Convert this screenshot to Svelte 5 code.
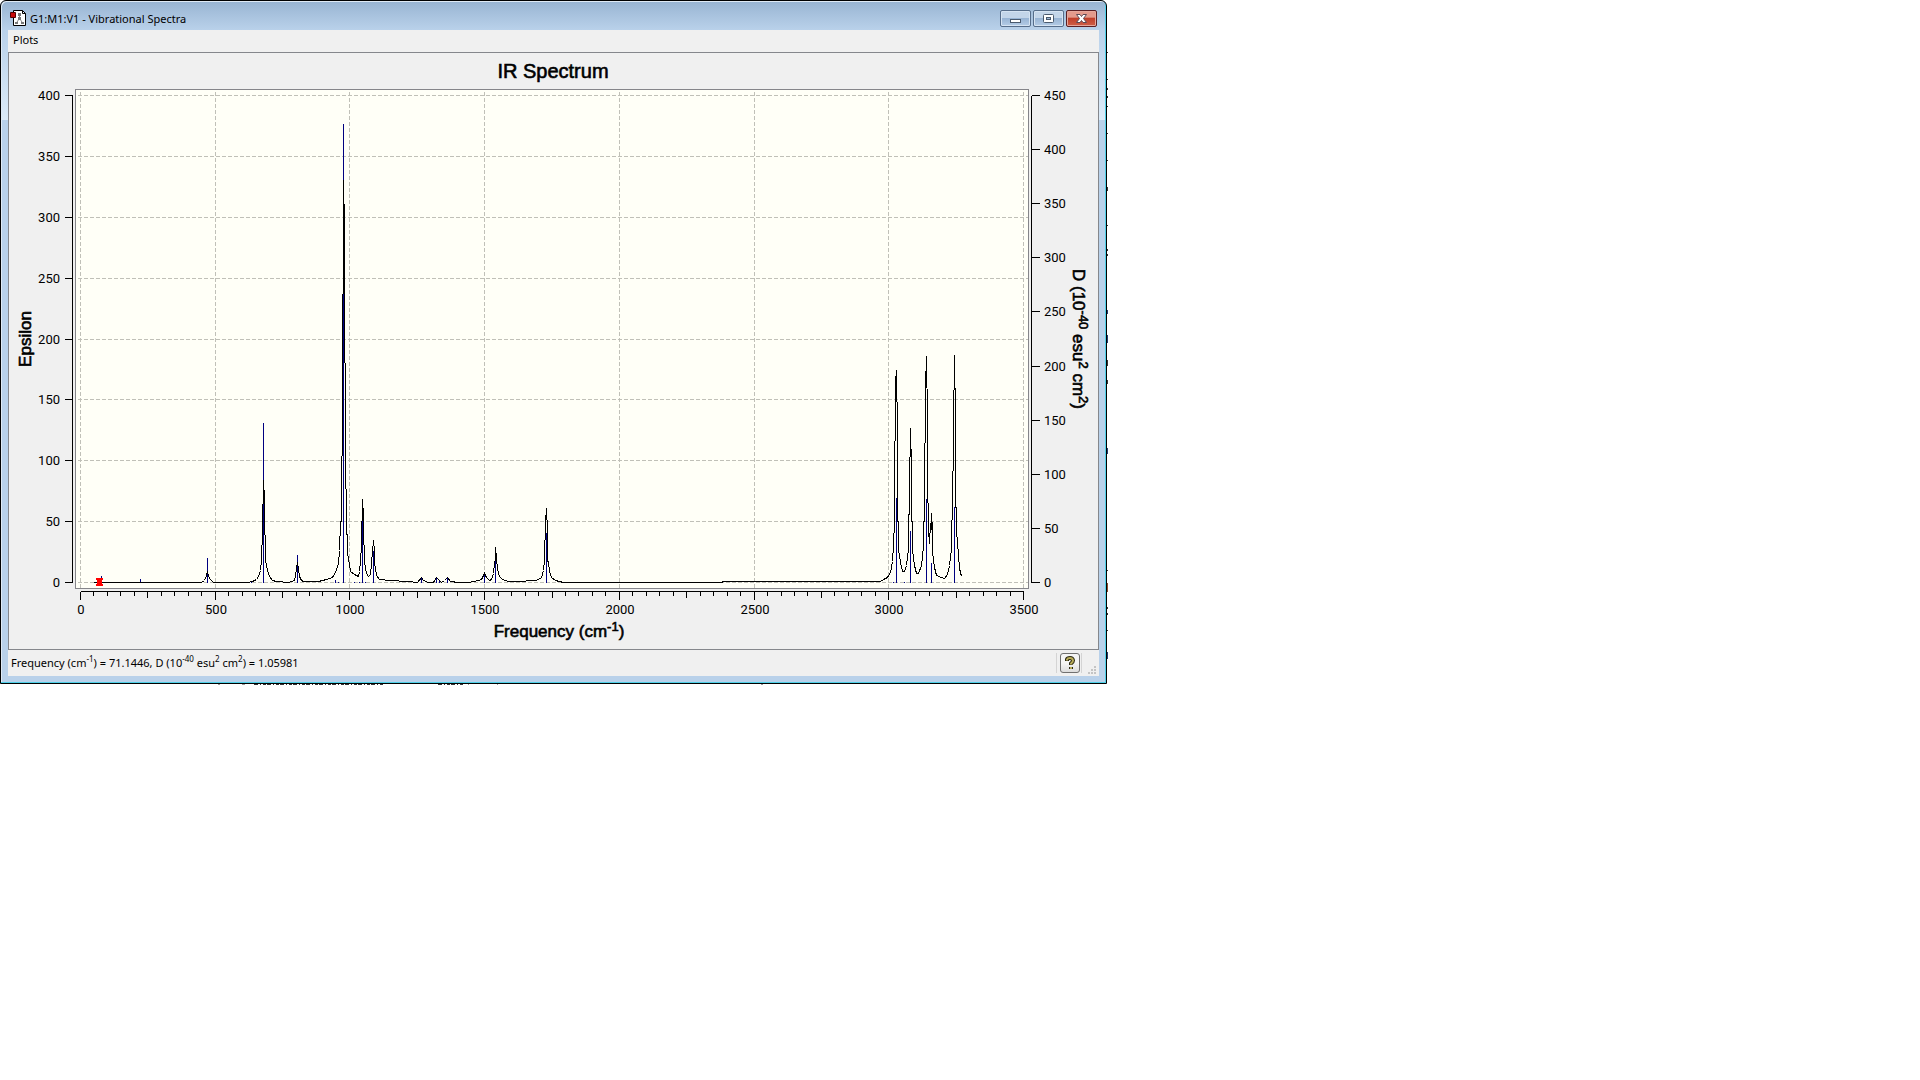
<script>
  // Chart geometry, in the units of the chart's viewBox
  const x0 = 80, xEnd = 1023, y0 = 582, yTop = 95;
  const xAt = (v) => Math.round(x0 + (v * (xEnd - x0)) / 3500);
  const yLeft = (v) => Math.round(y0 - (v * (y0 - yTop)) / 400);
  const yRight = (v) => Math.round(y0 - (v * (y0 - yTop)) / 450);
  const range = (n, step) => Array.from({ length: n }, (_, i) => i * step);

  const xMajor = range(8, 500);
  const xMinor = range(71, 50);
  const epsilon = range(9, 50);
  const dipole = range(10, 50);
  const tickEnd = (v) => (v % 500 === 0 ? 599 : v % 250 === 0 ? 597 : 595);

  // Dipole strengths: position and top of each stick
  const sticks = [
    [101, 576], [140, 579], [207, 558], [251, 582], [263, 423], [297, 555],
    [335, 580], [338, 582], [343, 124], [354, 582], [359, 582], [362, 520],
    [365, 582], [373, 551], [421, 578], [436, 577], [439, 581], [447, 577],
    [484, 575], [495, 557], [546, 533], [893, 582], [896, 498], [904, 582],
    [910, 531], [926, 499], [931, 563], [954, 507]
  ];

  const curve = [
    [93, 582], [201, 582], [204, 580], [206, 575], [207, 571], [208, 576], [210, 579], [213, 582],
    [247, 582], [252, 581], [256, 579], [258, 576], [260, 570], [261, 560], [262, 530], [262, 508],
    [263, 500], [263, 480], [264, 498], [264, 534], [265, 535], [265, 560], [267, 570], [269, 576],
    [272, 580], [276, 581], [288, 582], [291, 581], [294, 580], [295, 575], [296, 568], [297, 562],
    [298, 568], [299, 576], [301, 580], [303, 581], [318, 581], [326, 579], [332, 577], [335, 572],
    [338, 563], [339, 550], [340, 522], [341, 520], [341, 456], [342, 455], [342, 294], [343, 293],
    [343, 180], [344, 226], [344, 362], [345, 363], [345, 488], [346, 489], [346, 533], [347, 535],
    [347, 552], [349, 564], [350, 571], [354, 574], [358, 576], [359, 571], [360, 561], [361, 545],
    [361, 521], [362, 520], [362, 499], [363, 516], [363, 544], [364, 545], [364, 562], [366, 573],
    [368, 576], [370, 574], [371, 563], [372, 551], [373, 540], [374, 550], [374, 562], [376, 575],
    [379, 579], [390, 580], [407, 581], [417, 582], [421, 577], [423, 580], [428, 582], [433, 582],
    [436, 577], [439, 580], [441, 582], [444, 580], [447, 577], [450, 581], [458, 582], [468, 582],
    [478, 580], [481, 579], [484, 573], [486, 577], [489, 580], [491, 579], [493, 573], [494, 563],
    [495, 558], [495, 547], [496, 558], [497, 569], [499, 576], [502, 579], [508, 581], [515, 581],
    [536, 580], [541, 577], [543, 570], [544, 560], [544, 540], [545, 539], [545, 515], [546, 514],
    [546, 508], [547, 530], [547, 560], [548, 562], [549, 571], [551, 577], [555, 580], [563, 582],
    [720, 582], [724, 581], [880, 581], [883, 579], [887, 577], [890, 572], [892, 561], [893, 545],
    [894, 520], [894, 441], [895, 440], [895, 376], [896, 375], [896, 370], [897, 432], [897, 520],
    [898, 522], [898, 549], [900, 562], [902, 571], [904, 571], [906, 565], [908, 548], [908, 515],
    [909, 513], [909, 457], [910, 456], [910, 428], [911, 468], [911, 520], [912, 522], [912, 549],
    [914, 565], [916, 573], [918, 573], [921, 565], [923, 546], [923, 522], [924, 520], [924, 443],
    [925, 442], [925, 371], [926, 370], [926, 356], [927, 420], [927, 500], [928, 505], [928, 530],
    [929, 543], [930, 523], [931, 529], [931, 513], [932, 530], [932, 552], [934, 567], [936, 575],
    [941, 577], [944, 578], [947, 574], [949, 565], [951, 548], [951, 520], [952, 519], [952, 471],
    [953, 470], [953, 390], [954, 389], [954, 355], [955, 418], [955, 506], [956, 508], [956, 530],
    [958, 555], [959, 568], [961, 576]
  ].map((p) => p.join(',')).join(' ');
</script>

<main class="desktop">
  <section class="window" aria-label="Vibrational Spectra">
    <header class="titlebar">
      <svg class="app-icon" viewBox="0 0 16 16" aria-hidden="true">
        <path d="M3.5.5h9l3 3v12h-12z" fill="#fff" stroke="#000" />
        <path d="M12.5.5v3h3" fill="none" stroke="#000" />
        <path d="M9.5 4v4l-3 5M9.500 8l3 5" fill="none" stroke="#8a8a8a" />
        <path d="M8 3h3v3H8zM8 7h3v3H8zM5 12h3v2H5zM11 12h3v2h-3z" fill="#777" />
        <path d="M.5 2.500h5v5h-5z" fill="#c80a0a" stroke="#500" />
      </svg>
      <h1>G1:M1:V1 - Vibrational Spectra</h1>
      <div class="controls">
        <button class="control" aria-label="Minimize">
          <svg viewBox="0 0 29 15"><rect x="9.500" y="8.500" width="10" height="3" fill="#fff" stroke="#4a5a6e" /></svg>
        </button>
        <button class="control" aria-label="Maximize">
          <svg viewBox="0 0 29 15">
            <rect x="9.500" y="3.500" width="10" height="8" rx="1" fill="#fff" stroke="#4a5a6e" />
            <rect x="12.500" y="6.500" width="4" height="2" fill="#9db9d8" stroke="#4a5a6e" />
          </svg>
        </button>
        <button class="control close" aria-label="Close">
          <svg viewBox="0 0 29 15">
            <path d="M9.500 3.500h3.500l1.500 2 1.500-2h3.500l-3 4 3 4H16l-1.500-2-1.500 2H9.500l3-4z" fill="#fff" stroke="#5c4a55" />
          </svg>
        </button>
      </div>
    </header>

    <div class="body">
      <nav class="menubar"><button class="menu">Plots</button></nav>

      <figure class="chart">
        <svg viewBox="9 53 1089 596" role="img" aria-label="IR Spectrum">
          <rect class="canvas" x="75.5" y="89.5" width="953" height="499" />

          <g class="lines" transform="translate(.5 .5)">
            {#each xMajor as v}
              <line class="grid" x1={xAt(v)} x2={xAt(v)} y1="91" y2="587" />
            {/each}
            {#each epsilon as v}
              <line class="grid" x1="77" x2="1027" y1={yLeft(v)} y2={yLeft(v)} />
              <line class="axis" x1="64" x2="72" y1={yLeft(v)} y2={yLeft(v)} />
            {/each}
            {#each dipole as v}
              <line class="axis" x1="1031" x2="1039" y1={yRight(v)} y2={yRight(v)} />
            {/each}
            {#each xMinor as v}
              <line class="axis" x1={xAt(v)} x2={xAt(v)} y1="591" y2={tickEnd(v)} />
            {/each}
            <path class="axis" d="M72 95V582M1031 95V582M80 591H1023" />
          </g>
          <g class="lines" transform="translate(.5 0)">
            {#each sticks as [x, top]}
              <line class="stick" x1={x} x2={x} y1={top} y2="583" />
            {/each}
          </g>
          <g class="lines" transform="translate(.5 .5)">
            <polyline class="curve" points={curve} />
          </g>
          <path class="marker" d="M96 578h7v2h-1v4h1v2h-7v-2h1v-4h-1z" />

          <text class="title" x="553" y="78">IR Spectrum</text>
          {#each epsilon as v}
            <text class="tick end" x="60" y={yLeft(v) + 5}>{v}</text>
          {/each}
          {#each dipole as v}
            <text class="tick" x="1044" y={yRight(v) + 5}>{v}</text>
          {/each}
          {#each xMajor as v}
            <text class="tick mid" x={xAt(v) + 1} y="614">{v}</text>
          {/each}
          <text class="label" x="559" y="637">Frequency (cm<tspan class="sup" dy="-6">-1</tspan><tspan dy="6">)</tspan></text>
          <text class="label" transform="translate(31 339) rotate(-90)">Epsilon</text>
          <text class="label" transform="translate(1073 339) rotate(90)">D (10<tspan class="sup" dy="-6">-40</tspan><tspan dy="6">{' esu'}</tspan><tspan class="sup" dy="-6">2</tspan><tspan dy="6">{' cm'}</tspan><tspan class="sup" dy="-6">2</tspan><tspan dy="6">)</tspan></text>
        </svg>
      </figure>

      <footer class="status">
        <p>Frequency (cm<sup>-1</sup>) = 71.1446, D (10<sup>-40</sup> esu<sup>2</sup> cm<sup>2</sup>) = 1.05981</p>
        <div class="help-cell">
          <button class="help" aria-label="Help">
            <svg viewBox="0 0 16 16">
              <path d="M5 6V4.500Q5.500 3 8 3t3 2.500Q11 7 9 8.500V10M9 12v2" fill="none" stroke="#2c2a14" stroke-width="4" />
              <path d="M5 5.500V4.500Q5.500 3 8 3t3 2.500Q11 7 9 8.500V9.500M9 12v2" fill="none" stroke="#b8ac58" stroke-width="2" />
            </svg>
          </button>
        </div>
        <svg class="grip" viewBox="0 0 9 9" aria-hidden="true">
          <path d="M7 0h2v2H7zM4 3h2v2H4zM7 3h2v2H7zM1 6h2v2H1zM4 6h2v2H4zM7 6h2v2H7z" fill="#c4c4c4" />
        </svg>
      </footer>
    </div>
  </section>

  <!-- Slivers of the windows lying behind -->
  <svg class="behind-right" viewBox="0 0 2 684" aria-hidden="true">
    <path d="M0 52h1v1H0zM0 79h1v1H0zM0 88h1v2H0zM0 96h1v2H0zM0 106h1v1H0zM0 133h1v1H0zM0 160h1v1H0zM0 187h1v4H0zM0 225h1v1H0zM0 249h1v2H0zM0 254h1v2H0zM0 360h1v6H0zM0 380h1v4H0zM0 570h1v1H0zM0 607h1v2H0zM0 613h1v2H0zM0 630h1v1H0z" fill="#333" />
    <path d="M0 310h1v4H0zM0 335h1v8H0zM0 448h1v6H0zM0 652h1v7H0z" fill="#223a6e" />
    <path d="M0 583h1v9H0z" fill="#8a4a2a" />
  </svg>
  <svg class="behind-bottom" viewBox="0 0 800 2" aria-hidden="true">
    <path d="M218 0h2v1h-2zM242 0h3v1h-3zM468 0h1v1h-1zM497 0h1v1h-1zM761 0h2v1h-2z" fill="#999" />
    <path d="M254 .5H384M438 .5H463" stroke="#333" stroke-dasharray="4 2 1 2 3 1" />
  </svg>
</main>

<style>
  :global(body) { background: #fff; }
  .desktop {
    display: grid;
    grid-template-columns: auto 1fr;
    font-family: "Noto Sans", "Open Sans", sans-serif;
    font-size: 11px;
    color: #000;
  }
  .window {
    box-sizing: border-box;
    width: calc(57.5vw + 3px);
    border: 1px solid #000;
    border-radius: 6px 6px 0 0;
    padding: 0 7px 7px;
    background:
      linear-gradient(#b9d1ea, #dcebf8) 0 29px / 100% 90px no-repeat,
      linear-gradient(#98b4d2, #b9d1ea) 0 0 / 100% 29px no-repeat,
      #b9d1ea;
    box-shadow: inset -1px -1px #4fd0e8, inset 1px 1px #dfeaf5;
  }
  .titlebar {
    display: flex;
    align-items: center;
    height: 29px;
    padding: 0 2px;
    gap: 4px;
  }
  .app-icon { width: 16px; height: 16px; margin-top: 4px; }
  h1 { flex: 1; margin: 6px 0 0; font-size: 11px; line-height: 16px; font-weight: 400; }
  button { font: inherit; color: inherit; padding: 0; }
  .controls { display: flex; gap: 2px; padding-top: 6px; }
  .control {
    box-sizing: border-box;
    width: 31px;
    height: 17px;
    border: 1px solid #566d8a;
    border-radius: 2px;
    background: linear-gradient(#c3d5e9 0 45%, #98b4d4 50%, #b4cce6);
    box-shadow: inset 0 0 0 1px #d5e3f2;
  }
  .control svg { display: block; width: 29px; height: 15px; }
  .close {
    border-color: #5a1f24;
    background: linear-gradient(#e39a8c 0 40%, #c0402b 50%, #cf5f48);
    box-shadow: inset 0 0 0 1px #e5a79b;
  }
  .body { background: #f0f0f0; }
  .menubar { display: flex; align-items: flex-start; height: 22px; padding: 0 5px; }
  .menu { border: 0; background: none; line-height: 20px; }
  .chart { margin: 0; border: 1px solid #85878c; }
  .chart svg { display: block; width: 100%; font-family: "Liberation Sans", Arial, sans-serif; }
  .canvas { fill: #fffff7; stroke: #85858a; }
  .lines { shape-rendering: crispEdges; fill: none; }
  .grid { stroke: #c0c0b8; stroke-dasharray: 4 2; }
  .axis, .curve { stroke: #000; }
  .stick { stroke: #000080; }
  .marker { fill: #f00; }
  .title, .label { text-anchor: middle; stroke: #000; stroke-width: 0.6; }
  .title { font-size: 20px; }
  .tick { font-family: Roboto, sans-serif; font-size: 13px; }
  .end { text-anchor: end; }
  .mid { text-anchor: middle; }
  .label { font-size: 17px; }
  .sup { font-size: 13px; }
  .status { display: flex; align-items: center; height: 26px; padding: 0 3px; }
  .status p { flex: 1; margin: 0; line-height: 20px; }
  sup { font-size: 8px; line-height: 0; }
  .help-cell {
    border: solid #d4d4d4;
    border-width: 0 1px;
    padding: 0 1px 0 3px;
    height: 20px;
  }
  .help {
    box-sizing: border-box;
    width: 20px;
    height: 20px;
    border: 1px solid #707070;
    border-radius: 3px;
    background: linear-gradient(#f5f5f5 50%, #dcdcdc);
  }
  .help svg { display: block; width: 16px; height: 16px; margin: 0 auto; }
  .grip { width: 9px; height: 9px; margin-left: 5px; align-self: flex-end; padding-bottom: 1px; }
  .behind-right { width: 2px; height: 684px; }
  .behind-bottom { width: 800px; height: 2px; }
</style>
